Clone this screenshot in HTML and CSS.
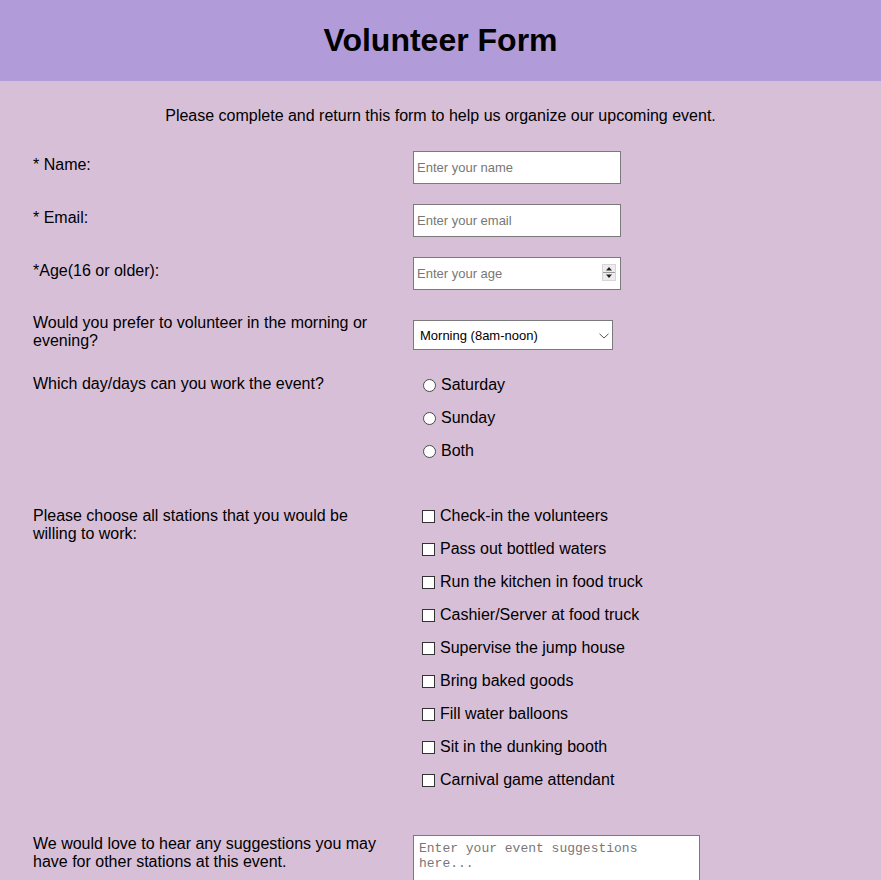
FILE: index.html
```html
<!DOCTYPE html>
<html lang="en">
<head>
<meta charset="utf-8">
<title>Volunteer Form</title>
<link rel="stylesheet" href="styles.css">
</head>
<body>
<header class="header">
  <h1 class="title">Volunteer Form</h1>
</header>
<main class="content">
  <p class="intro">Please complete and return this form to help us organize our upcoming event.</p>
  <form class="form">
    <div class="row row-text">
      <label class="label" for="name">* Name:</label>
      <div class="field"><input class="text-input" id="name" type="text" placeholder="Enter your name"></div>
    </div>
    <div class="row row-text">
      <label class="label" for="email">* Email:</label>
      <div class="field"><input class="text-input" id="email" type="email" placeholder="Enter your email"></div>
    </div>
    <div class="row row-text row-age">
      <label class="label" for="age">*Age(16 or older):</label>
      <div class="field">
        <span class="number-wrap">
          <input class="text-input number-input" id="age" type="number" placeholder="Enter your age">
          <svg class="spinner" width="14" height="17" viewBox="0 0 14 17" aria-hidden="true">
            <rect x="0.5" y="0.5" width="13" height="16" fill="#ececec" stroke="#d6d6d6"/>
            <line x1="1" y1="8.5" x2="13" y2="8.5" stroke="#9a9a9a"/>
            <path d="M4 6.5 L7 3 L10 6.5 Z" fill="#222"/>
            <path d="M4 10.5 L7 14 L10 10.5 Z" fill="#222"/>
          </svg>
        </span>
      </div>
    </div>
    <div class="row row-select">
      <label class="label" for="time">Would you prefer to volunteer in the morning or evening?</label>
      <div class="field field-select">
        <span class="select-wrap">
          <select class="select" id="time">
            <option>Morning (8am-noon)</option>
            <option>Evening (4pm-8pm)</option>
          </select>
          <svg class="chevron" width="10" height="6" viewBox="0 0 10 6" aria-hidden="true">
            <path d="M0.5 0.8 L5 5 L9.5 0.8" fill="none" stroke="#555" stroke-width="1"/>
          </svg>
        </span>
      </div>
    </div>
    <div class="row row-days">
      <div class="label">Which day/days can you work the event?</div>
      <div class="field options radios">
        <label class="option"><input type="radio" name="day"> Saturday</label>
        <label class="option"><input type="radio" name="day"> Sunday</label>
        <label class="option"><input type="radio" name="day"> Both</label>
      </div>
    </div>
    <div class="row row-stations">
      <div class="label">Please choose all stations that you would be willing to work:</div>
      <div class="field options checks">
        <label class="option"><input type="checkbox"> Check-in the volunteers</label>
        <label class="option"><input type="checkbox"> Pass out bottled waters</label>
        <label class="option"><input type="checkbox"> Run the kitchen in food truck</label>
        <label class="option"><input type="checkbox"> Cashier/Server at food truck</label>
        <label class="option"><input type="checkbox"> Supervise the jump house</label>
        <label class="option"><input type="checkbox"> Bring baked goods</label>
        <label class="option"><input type="checkbox"> Fill water balloons</label>
        <label class="option"><input type="checkbox"> Sit in the dunking booth</label>
        <label class="option"><input type="checkbox"> Carnival game attendant</label>
      </div>
    </div>
    <div class="row row-suggest">
      <label class="label" for="suggest">We would love to hear any suggestions you may have for other stations at this event.</label>
      <div class="field"><textarea class="textarea" id="suggest" placeholder="Enter your event suggestions here..."></textarea></div>
    </div>
  </form>
</main>
</body>
</html>
```

FILE: styles.css
```css
html, body {
  margin: 0;
  padding: 0;
}

body {
  background: #d8bfd8;
  color: #000;
  font-family: "Liberation Sans", Arial, sans-serif;
  font-size: 16px;
  line-height: 18px;
}

.header {
  background: #b19cd9;
  height: 81px;
  display: flex;
  align-items: center;
  justify-content: center;
}

.title {
  margin: 0;
  font-size: 32px;
  line-height: 37px;
  font-weight: bold;
}

.content {
  padding: 26px 0 0 0;
}

.intro {
  margin: 0 0 26px 0;
  text-align: center;
}

.form {
  display: flex;
  flex-direction: column;
  padding-left: 33px;
}

.row {
  display: grid;
  grid-template-columns: 360px 1fr;
  column-gap: 20px;
  align-items: start;
}

.label {
  display: block;
}

.row-text {
  margin-bottom: 20px;
}

.row-text .label {
  padding-top: 5px;
}

.row-age {
  margin-bottom: 24px;
}

.row-select {
  margin-bottom: 25px;
}

.field-select {
  padding-top: 6px;
}

.row-days {
  margin-bottom: 47px;
}

.row-stations {
  margin-bottom: 46px;
}

.text-input {
  box-sizing: border-box;
  width: 208px;
  height: 33px;
  margin: 0;
  padding: 0 3px;
  border: 1px solid #7a7a7a;
  background: #fff;
  font-family: "Liberation Sans", Arial, sans-serif;
  font-size: 13px;
  color: #000;
  outline: none;
  display: block;
}

.text-input::placeholder,
.textarea::placeholder {
  color: #777;
  opacity: 1;
}

.number-wrap {
  position: relative;
  display: block;
  width: 208px;
}

.number-input {
  -moz-appearance: textfield;
  appearance: textfield;
}

.number-input::-webkit-inner-spin-button,
.number-input::-webkit-outer-spin-button {
  -webkit-appearance: none;
  margin: 0;
}

.spinner {
  position: absolute;
  left: 189px;
  top: 7px;
}

.select-wrap {
  position: relative;
  display: block;
  width: 200px;
}

.select {
  box-sizing: border-box;
  width: 200px;
  height: 30px;
  margin: 0;
  padding: 0 0 0 6px;
  border: 1px solid #7a7a7a;
  border-radius: 0;
  background: #fff;
  font-family: "Liberation Sans", Arial, sans-serif;
  font-size: 13px;
  color: #000;
  appearance: none;
  -webkit-appearance: none;
  display: block;
}

.chevron {
  position: absolute;
  left: 186px;
  top: 13px;
  pointer-events: none;
}

.options {
  display: flex;
  flex-direction: column;
  gap: 15px;
  padding-top: 1px;
}

.option {
  display: flex;
  align-items: center;
  gap: 5px;
  height: 18px;
  line-height: 18px;
}

.radios .option {
  padding-left: 10px;
}

.checks .option {
  padding-left: 9px;
}

.option input {
  width: 13px;
  height: 13px;
  margin: 1px 0 0 0;
  -webkit-appearance: none;
  appearance: none;
  box-sizing: border-box;
  background: #fff;
}

.radios .option input {
  border: 1px solid #4a4a4a;
  border-radius: 50%;
}

.checks .option input {
  border: 1px solid #333;
  border-radius: 0;
}

.row-stations .options {
  padding-top: 0;
}

.textarea {
  box-sizing: border-box;
  width: 287px;
  height: 80px;
  margin: 0;
  padding: 5px 5px 4px 5px;
  border: 1px solid #7a7a7a;
  background: #fff;
  font-family: "Liberation Mono", "Courier New", monospace;
  font-size: 13px;
  line-height: 15px;
  resize: both;
  display: block;
}
```
